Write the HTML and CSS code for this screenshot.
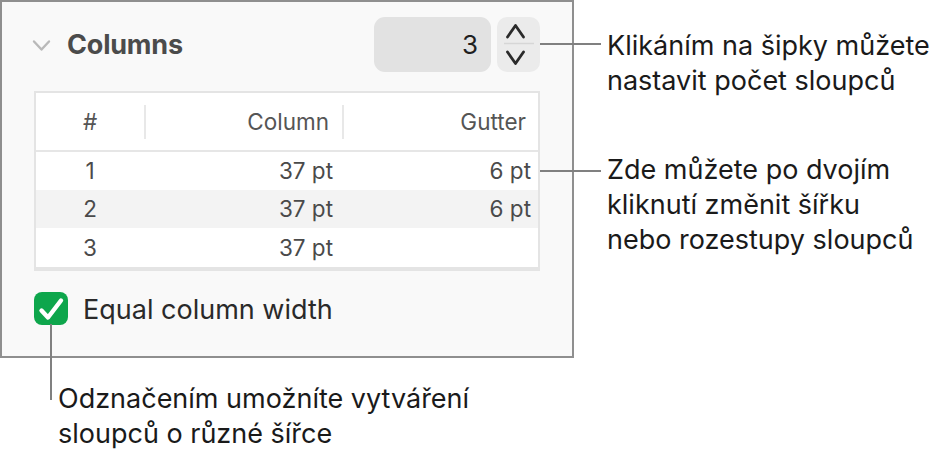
FILE: index.html
```html
<!DOCTYPE html>
<html lang="cs">
<head>
<meta charset="utf-8">
<link rel="stylesheet" href="styles.css">
</head>
<body>
<div class="canvas">
  <div class="panel">
    <div class="header">
      <svg class="disclosure" width="19" height="13" viewBox="0 0 19 13"><path d="M2 2.5 L9.5 10.5 L17 2.5" fill="none" stroke="#b9b9b9" stroke-width="2.4" stroke-linecap="round" stroke-linejoin="round"/></svg>
      <span class="title">Columns</span>
      <span class="spacer"></span>
      <div class="field">3</div>
      <div class="stepper">
        <svg width="43" height="55" viewBox="0 0 43 55">
          <path d="M10.5 20 L18.5 8.5 L26.5 20" fill="none" stroke="#2a2a2a" stroke-width="2.8" stroke-linecap="round" stroke-linejoin="round"/>
          <line x1="7" y1="26.5" x2="37" y2="26.5" stroke="#d6d6d6" stroke-width="1.5"/>
          <path d="M10.5 35 L18.5 46.5 L26.5 35" fill="none" stroke="#2a2a2a" stroke-width="2.8" stroke-linecap="round" stroke-linejoin="round"/>
        </svg>
      </div>
    </div>
    <div class="table">
      <div class="thead">
        <div class="th c1">#</div>
        <div class="th c2 sep">Column</div>
        <div class="th c3 sep">Gutter</div>
      </div>
      <div class="row">
        <div class="td c1">1</div>
        <div class="td c2">37 pt</div>
        <div class="td c3">6 pt</div>
      </div>
      <div class="row alt">
        <div class="td c1">2</div>
        <div class="td c2">37 pt</div>
        <div class="td c3">6 pt</div>
      </div>
      <div class="row last">
        <div class="td c1">3</div>
        <div class="td c2">37 pt</div>
        <div class="td c3"></div>
      </div>
    </div>
    <div class="check-row">
      <div class="checkbox">
        <svg width="34" height="33" viewBox="0 0 34 33"><path d="M7.5 18.5 L14 25.5 L27 8.5" fill="none" stroke="#ffffff" stroke-width="4.4" stroke-linecap="round" stroke-linejoin="round"/></svg>
      </div>
      <span class="check-label">Equal column width</span>
    </div>
  </div>

  <div class="hline line-a"></div>
  <div class="note note-a">Klikáním na šipky můžete<br>nastavit počet sloupců</div>

  <div class="hline line-b"></div>
  <div class="note note-b">Zde můžete po dvojím<br>kliknutí změnit šířku<br>nebo rozestupy sloupců</div>

  <div class="vline line-c"></div>
  <div class="note note-c">Odznačením umožníte vytváření<br>sloupců o různé šířce</div>
</div>
</body>
</html>
```

FILE: styles.css
```css
html, body {
  margin: 0;
  padding: 0;
  background: #ffffff;
}

body {
  font-family: Inter, "Noto Sans", "Liberation Sans", sans-serif;
}

.canvas {
  position: relative;
  width: 942px;
  height: 455px;
  overflow: hidden;
}

.panel {
  box-sizing: border-box;
  width: 574px;
  height: 358px;
  border: 2px solid #8f8f8f;
  background: #f9f9f9;
  padding: 15px 32px 0 32px;
}

.header {
  display: flex;
  align-items: center;
  height: 55px;
}

.disclosure {
  margin-left: -2px;
  margin-top: 2px;
  flex: none;
}

.title {
  margin-left: 16px;
  font-size: 27px;
  font-weight: 700;
  color: #4b4b4b;
  letter-spacing: -0.2px;
}

.spacer {
  flex: 1;
}

.field {
  box-sizing: border-box;
  width: 117px;
  height: 55px;
  border-radius: 11px;
  background: #e2e2e2;
  font-size: 26px;
  color: #1f1f1f;
  line-height: 55px;
  text-align: right;
  padding-right: 13px;
}

.stepper {
  width: 43px;
  height: 55px;
  margin-left: 6px;
  border-radius: 10px;
  background: #ebebeb;
}

.stepper svg {
  display: block;
}

.table {
  margin-top: 19px;
  width: 506px;
  box-sizing: border-box;
  border: 2px solid #e4e4e4;
  border-bottom-width: 4px;
  background: #ffffff;
  font-size: 22.5px;
  color: #4a4a4a;
}

.thead,
.row {
  display: grid;
  grid-template-columns: 108px 198px 1fr;
  align-items: center;
}

.thead {
  height: 57px;
  border-bottom: 2px solid #e6e6e6;
  color: #555555;
}

.th {
  height: 34px;
  line-height: 34px;
}

.th.sep {
  border-left: 2px solid #e8e8e8;
}

.c1 {
  text-align: center;
}

.th.c2 {
  text-align: right;
  padding-right: 13px;
}

.th.c3 {
  text-align: right;
  padding-right: 12px;
}

.row {
  height: 38px;
  line-height: 38px;
}

.row.last {
  height: 39px;
}

.row.alt {
  background: #f3f3f3;
}

.td.c2 {
  text-align: right;
  padding-right: 9px;
}

.td.c3 {
  text-align: right;
  padding-right: 7px;
}

.check-row {
  display: flex;
  align-items: center;
  margin-top: 20px;
}

.checkbox {
  width: 34px;
  height: 33px;
  border-radius: 8px;
  background: #0ea64c;
  flex: none;
}

.checkbox svg {
  display: block;
}

.check-label {
  margin-left: 15px;
  font-size: 27px;
  color: #2a2a2a;
  margin-top: 2px;
}

.hline {
  position: absolute;
  height: 2px;
  background: #808080;
}

.vline {
  position: absolute;
  width: 2px;
  background: #808080;
}

.line-a {
  left: 540px;
  top: 43px;
  width: 61px;
}

.line-b {
  left: 540px;
  top: 170px;
  width: 61px;
}

.line-c {
  left: 50px;
  top: 324px;
  height: 76px;
}

.note {
  position: absolute;
  font-size: 27px;
  line-height: 35px;
  color: #1a1a1a;
  white-space: nowrap;
}

.note-a {
  left: 607px;
  top: 28px;
}

.note-b {
  left: 607px;
  top: 152px;
}

.note-c {
  left: 58px;
  top: 381px;
}
```
